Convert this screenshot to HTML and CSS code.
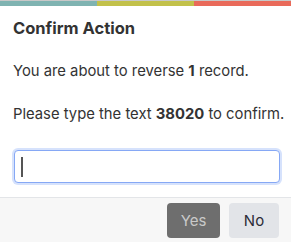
FILE: index.html
```html
<!DOCTYPE html>
<html lang="en">
<head>
    <meta charset="UTF-8">
    <title>Confirm Action</title>
    <link rel="stylesheet" href="styles.css">
</head>
<body>
    <div class="dialog">
        <div class="stripe">
            <div class="stripe-part teal"></div>
            <div class="stripe-part lime"></div>
            <div class="stripe-part coral"></div>
        </div>
        <div class="dialog-body">
            <h1>Confirm Action</h1>
            <p>You are about to reverse <b>1</b> record.</p>
            <p class="last">Please type the text <b>38020</b> to confirm.</p>
            <div class="input-wrap">
                <input type="text" class="confirm-input" autofocus>
                <span class="caret"></span>
            </div>
        </div>
        <div class="dialog-footer">
            <button class="btn btn-yes">Yes</button>
            <button class="btn btn-no">No</button>
        </div>
    </div>
</body>
</html>
```

FILE: styles.css
```css
body {
    margin: 0;
    background: #fff;
    font-family: Inter, Arial, sans-serif;
    color: #333;
}
.dialog {
    width: 291px;
    height: 242px;
    display: flex;
    flex-direction: column;
    overflow: hidden;
}
.stripe {
    display: flex;
    flex-shrink: 0;
    height: 5px;
    border-top: 1px solid #c8c8c8;
}
.stripe-part {
    flex: 1;
}
.teal {
    background: #7fb3b1;
}
.lime {
    background: #c2c14a;
}
.coral {
    background: #e96a5a;
}
.dialog-body {
    flex-shrink: 0;
    padding: 12px 13px 14px 13px;
}
h1 {
    font-size: 16.5px;
    line-height: 20px;
    font-weight: 700;
    margin: 0 0 23px 0;
    color: #333;
}
p {
    font-size: 14.8px;
    line-height: 20px;
    margin: 0 0 23px 0;
    color: #333;
    white-space: nowrap;
}
p.last {
    margin-bottom: 26px;
}
.input-wrap {
    position: relative;
    width: 266px;
    margin-left: 1px;
}
.confirm-input {
    display: block;
    box-sizing: border-box;
    width: 266px;
    height: 33px;
    border: 1px solid #86a8f5;
    border-radius: 4px;
    box-shadow: 0 0 0 2px #d6e2fc;
    outline: none;
    font-size: 15px;
    padding: 4px 8px;
    caret-color: transparent;
}
.caret {
    position: absolute;
    left: 7px;
    top: 7px;
    width: 2px;
    height: 20px;
    background: #555;
}
.dialog-footer {
    flex: 1;
    display: flex;
    justify-content: flex-end;
    gap: 9px;
    padding: 5px 12px 0 0;
    background: #f7f7f7;
    border-top: 1px solid #e3e5e8;
}
.btn {
    height: 35px;
    border: none;
    border-radius: 4px;
    font-family: Inter, Arial, sans-serif;
    font-size: 15px;
    padding: 0;
}
.btn-yes {
    width: 53px;
    background: #6e6e6e;
    color: #c9c9c9;
}
.btn-no {
    width: 50px;
    background: #e2e4e8;
    color: #2c2c38;
}
```
